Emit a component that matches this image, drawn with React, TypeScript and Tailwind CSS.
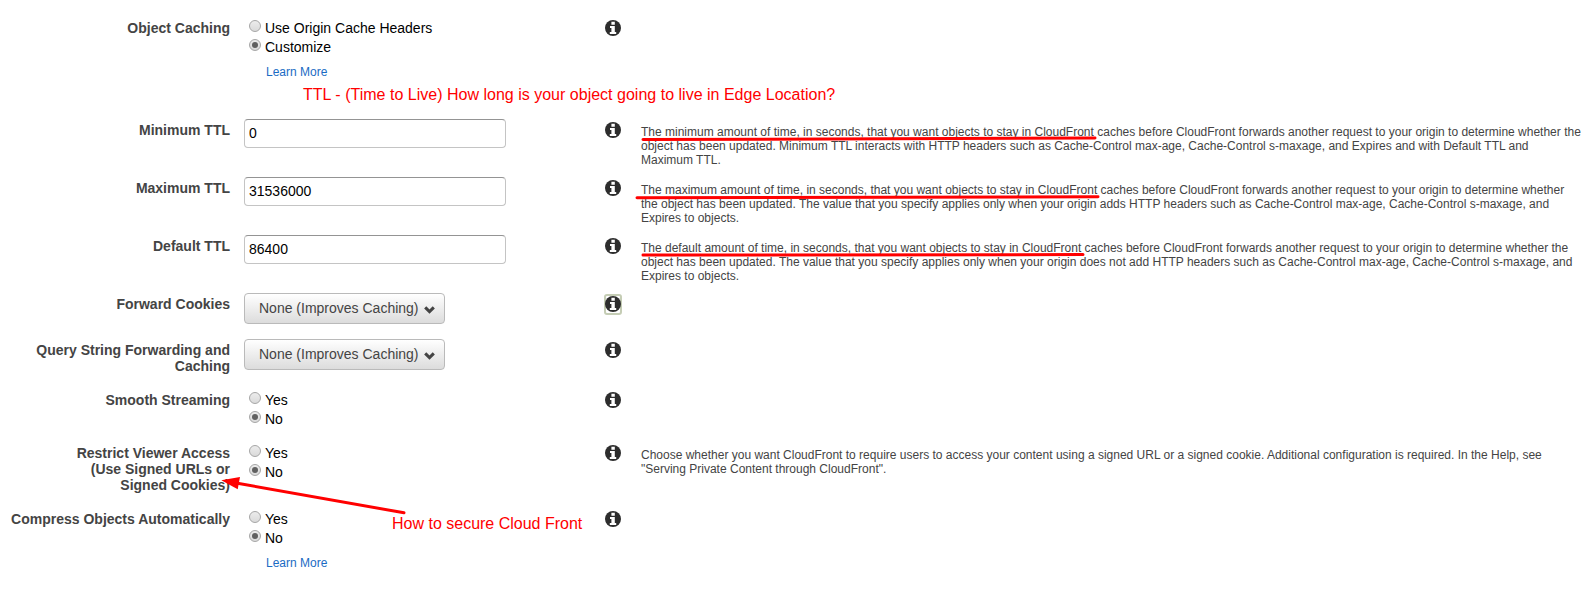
import type { ReactNode } from "react";

function InfoIcon() {
  return (
    <svg className="block h-4 w-4" viewBox="0 0 16 16">
      <circle cx="8" cy="8" r="8" fill="#2d2d2d" />
      <path d="M6.4 1.8h3.4v2.9H6.4zM5 6h4.8v5.9h1.4v2.1H4.8v-2.1h1.6V8H5z" fill="#fff" />
    </svg>
  );
}

function Row({
  label,
  height,
  help,
  focused = false,
  children,
}: {
  label: ReactNode;
  height: string;
  help?: ReactNode;
  focused?: boolean;
  children: ReactNode;
}) {
  return (
    <div className={"flex items-start " + height}>
      <div className="w-[230px] shrink-0 text-right text-sm leading-4 font-bold whitespace-nowrap text-[#444]">
        {label}
      </div>
      <div className="ml-3.5 w-[360px] shrink-0">{children}</div>
      <button
        className={
          focused
            ? "-mt-0.5 h-[21px] w-[18px] shrink-0 rounded-[3px] border-2 border-[#c5cdb5] px-0"
            : "h-4 w-[18px] shrink-0 px-px"
        }
      >
        <span className={focused ? "-ml-px block h-[17px] w-4" : "block"}>
          <InfoIcon />
        </span>
      </button>
      <p className="mt-[3px] ml-[19px] text-xs leading-[14px] whitespace-nowrap text-[#444]">{help}</p>
    </div>
  );
}

function Radio({ text, checked = false }: { text: string; checked?: boolean }) {
  return (
    <label className="flex h-[19px] items-start pl-[5px] text-sm leading-4 text-black">
      <span className="mr-1 flex h-3 w-3 items-center justify-center rounded-full border border-[#a6a6a6] bg-linear-to-b from-[#ececec] to-[#dadada]">
        {checked && <span className="h-1.5 w-1.5 rounded-full bg-[#606060]" />}
      </span>
      {text}
    </label>
  );
}

function LearnMore() {
  return <a className="mt-[7px] ml-[22px] block text-xs leading-[14px] text-[#1a6bc4]">Learn More</a>;
}

function Field({ value }: { value: string }) {
  return (
    <input
      readOnly
      value={value}
      className="-mt-[3px] block h-[29px] w-[262px] rounded-[4px] border border-[#c4c4c4] border-t-[#949494] bg-white px-1 pb-0.5 text-sm leading-4 text-black outline-none"
    />
  );
}

function Dropdown() {
  return (
    <button className="-mt-[3px] flex h-[31px] w-[201px] items-center rounded-[4px] border border-[#bababa] bg-linear-to-b from-white to-[#dcdcdc] pb-0.5 pl-3.5 text-sm leading-4 whitespace-nowrap text-[#444]">
      None (Improves Caching)
      <svg className="mt-[5px] ml-[5px] h-2 w-[11px]" viewBox="0 0 11 8">
        <path d="M1.2 1.4 5.5 5.6 9.8 1.4" fill="none" stroke="#444" strokeWidth="3" />
      </svg>
    </button>
  );
}

export default function App() {
  return (
    <div className="relative h-[597px] w-[1588px] overflow-hidden bg-white pt-5 font-['Liberation_Sans',Arial,sans-serif]">
      <Row label="Object Caching" height="h-[102px]">
        <Radio text="Use Origin Cache Headers" />
        <Radio text="Customize" checked />
        <LearnMore />
      </Row>
      <Row
        label="Minimum TTL"
        height="h-[58px]"
        help={
          <>
            The minimum amount of time, in seconds, that you want objects to stay in CloudFront caches before CloudFront
            forwards another request to your origin to determine whether the
            <br />
            object has been updated. Minimum TTL interacts with HTTP headers such as Cache-Control max-age,
            Cache-Control s-maxage, and Expires and with Default TTL and
            <br />
            Maximum TTL.
          </>
        }
      >
        <Field value="0" />
      </Row>
      <Row
        label="Maximum TTL"
        height="h-[58px]"
        help={
          <>
            The maximum amount of time, in seconds, that you want objects to stay in CloudFront caches before CloudFront
            forwards another request to your origin to determine whether
            <br />
            the object has been updated. The value that you specify applies only when your origin adds HTTP headers such
            as Cache-Control max-age, Cache-Control s-maxage, and
            <br />
            Expires to objects.
          </>
        }
      >
        <Field value="31536000" />
      </Row>
      <Row
        label="Default TTL"
        height="h-[58px]"
        help={
          <>
            The default amount of time, in seconds, that you want objects to stay in CloudFront caches before CloudFront
            forwards another request to your origin to determine whether the
            <br />
            object has been updated. The value that you specify applies only when your origin does not add HTTP headers
            such as Cache-Control max-age, Cache-Control s-maxage, and
            <br />
            Expires to objects.
          </>
        }
      >
        <Field value="86400" />
      </Row>
      <Row label="Forward Cookies" height="h-[46px]" focused>
        <Dropdown />
      </Row>
      <Row
        label={
          <>
            Query String Forwarding and
            <br />
            Caching
          </>
        }
        height="h-[50px]"
      >
        <Dropdown />
      </Row>
      <Row label="Smooth Streaming" height="h-[53px]">
        <Radio text="Yes" />
        <Radio text="No" checked />
      </Row>
      <Row
        label={
          <>
            Restrict Viewer Access
            <br />
            (Use Signed URLs or
            <br />
            Signed Cookies)
          </>
        }
        height="h-[66px]"
        help={
          <>
            Choose whether you want CloudFront to require users to access your content using a signed URL or a signed
            cookie. Additional configuration is required. In the Help, see
            <br />
            "Serving Private Content through CloudFront".
          </>
        }
      >
        <Radio text="Yes" />
        <Radio text="No" checked />
      </Row>
      <Row label="Compress Objects Automatically" height="h-[80px]">
        <Radio text="Yes" />
        <Radio text="No" checked />
        <LearnMore />
      </Row>

      <div className="absolute top-[86px] left-[303px] text-base leading-[18px] tracking-[0.01px] whitespace-nowrap text-[#ff0000]">
        TTL - (Time to Live) How long is your object going to live in Edge Location?
      </div>
      <div className="absolute top-[515px] left-[392px] text-base leading-[18px] whitespace-nowrap text-[#ff0000]">
        How to secure Cloud Front
      </div>
      <svg
        className="pointer-events-none absolute inset-0 h-[597px] w-[1588px]"
        viewBox="0 0 1588 597"
        stroke="#ff0000"
        strokeWidth="3"
        strokeLinecap="round"
      >
        <path d="M643 139.6 1095 138" />
        <path d="M637 197.8 1098 196.8" />
        <path d="M643 255 1083 254.6" />
        <path d="M236 483 404 512.8" />
        <path d="M221.3 480.3 240 477 237.7 489.3Z" fill="#ff0000" stroke="none" />
      </svg>
    </div>
  );
}
